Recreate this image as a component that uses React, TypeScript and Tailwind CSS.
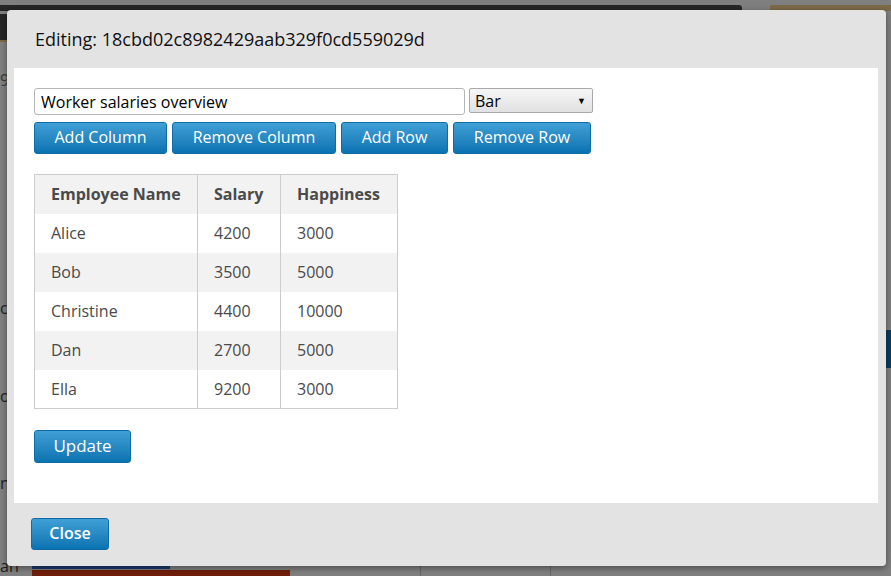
import React, { useState } from "react";

const rows = [
    { name: "Alice", salary: 4200, happiness: 3000 },
    { name: "Bob", salary: 3500, happiness: 5000 },
    { name: "Christine", salary: 4400, happiness: 10000 },
    { name: "Dan", salary: 2700, happiness: 5000 },
    { name: "Ella", salary: 9200, happiness: 3000 },
];

const btn =
    "h-[32px] rounded-[3px] border border-[#0e6ca3] bg-gradient-to-b from-[#3f9fd6] to-[#0873b1] text-white text-[16px] leading-none pb-[2px]";

const App: React.FC = () => {
    const [title, setTitle] = useState("Worker salaries overview");

    return <div className="relative w-[891px] h-[576px] overflow-hidden bg-[#7f7f7f]" style={{ fontFamily: "'Open Sans', sans-serif" }}>
                {/* page behind the overlay */}
                <div className="flex mt-[5px] h-[6px]">
                    <div className="w-[742px] bg-[#262626] rounded-tr-[3px]"></div>
                    <div className="w-[28px]"></div>
                    <div className="flex-1 bg-[#7c6a47]"></div>
                </div>
                <div className="absolute left-0 top-[14px] w-[7px] h-[28px] bg-[#262626] border-b-2 border-[#7c6a47]"></div>
                <div className="absolute left-0 top-[72px] text-[16px] text-[#3a3a3a] leading-none">9.</div>
                <div className="absolute left-0 top-[300px] text-[16px] text-[#1e1e1e] leading-none">c</div>
                <div className="absolute left-0 top-[388px] text-[16px] text-[#1e1e1e] leading-none">o</div>
                <div className="absolute left-0 top-[475px] text-[16px] text-[#1e1e1e] leading-none">n</div>
                <div className="absolute left-0 top-[558px] text-[16px] text-[#1e1e1e] leading-none">an</div>
                <div className="absolute left-[32px] top-[566px] w-[138px] h-[3px] bg-[#1b386a]"></div>
                <div className="absolute left-[32px] top-[570px] w-[258px] h-[6px] bg-[#701e0a]"></div>
                <div className="absolute left-[420px] top-[566px] w-px h-[10px] bg-[#666]"></div>
                <div className="absolute left-[550px] top-[566px] w-px h-[10px] bg-[#666]"></div>
                <div className="absolute left-[886px] top-[330px] w-[5px] h-[38px] bg-[#0d3a5c]"></div>

                {/* modal */}
                <div className="absolute left-[7px] top-[10px] w-[879px] h-[556px] rounded-[4px] bg-[#e3e3e3] shadow-[0_2px_6px_rgba(0,0,0,0.4)] flex flex-col">
                    <div className="h-[58px] flex items-center pl-[28px] text-[18px] text-[#111]">
                        Editing: 18cbd02c8982429aab329f0cd559029d
                    </div>
                    <div className="ml-[7px] w-[864px] h-[435px] bg-white pt-[20px] pl-[20px]">
                        <div className="flex items-start gap-[4px]">
                            <input
                                value={title}
                                onChange={(e) => setTitle(e.target.value)}
                                className="w-[431px] h-[27px] border border-[#b5b5b5] rounded-[3px] px-[6px] text-[16px] text-black outline-none"
                            />
                            <div className="w-[124px] h-[25px] border border-[#a9a9a9] rounded-[2px] bg-gradient-to-b from-[#f6f6f6] to-[#e1e1e1] flex items-center justify-between pl-[5px] pr-[6px] text-[16px] text-black">
                                <span>Bar</span>
                                <span className="text-[9px]">▼</span>
                            </div>
                        </div>
                        <div className="flex gap-[5px] mt-[7px]">
                            <button className={`${btn} w-[133px]`}>Add Column</button>
                            <button className={`${btn} w-[164px]`}>Remove Column</button>
                            <button className={`${btn} w-[107px]`}>Add Row</button>
                            <button className={`${btn} w-[138px]`}>Remove Row</button>
                        </div>

                        <table className="mt-[20px] border-collapse border border-[#cccccc] text-[16px] text-[#4a4a4a]">
                            <thead>
                                <tr className="bg-[#f2f2f2] h-[39px]">
                                    <th className="w-[163px] text-left font-bold pl-[16px] border-r border-[#cccccc]">Employee Name</th>
                                    <th className="w-[83px] text-left font-bold pl-[16px] border-r border-[#cccccc]">Salary</th>
                                    <th className="w-[117px] text-left font-bold pl-[16px]">Happiness</th>
                                </tr>
                            </thead>
                            <tbody>
                                {rows.map((r, i) => (
                                    <tr key={r.name} className={`h-[39px] ${i % 2 === 1 ? "bg-[#f2f2f2]" : "bg-white"}`}>
                                        <td className="pl-[16px] border-r border-[#cccccc]">{r.name}</td>
                                        <td className="pl-[16px] border-r border-[#cccccc]">{r.salary}</td>
                                        <td className="pl-[16px]">{r.happiness}</td>
                                    </tr>
                                ))}
                            </tbody>
                        </table>

                        <button className={`${btn} w-[97px] h-[33px] mt-[21px] text-[17px]`}>Update</button>
                    </div>
                    <div className="pl-[24px] pt-[15px]">
                        <button className={`${btn} w-[78px] h-[31px] text-[15px] font-semibold`}>Close</button>
                    </div>
                </div>
            </div>
}

export default App;
